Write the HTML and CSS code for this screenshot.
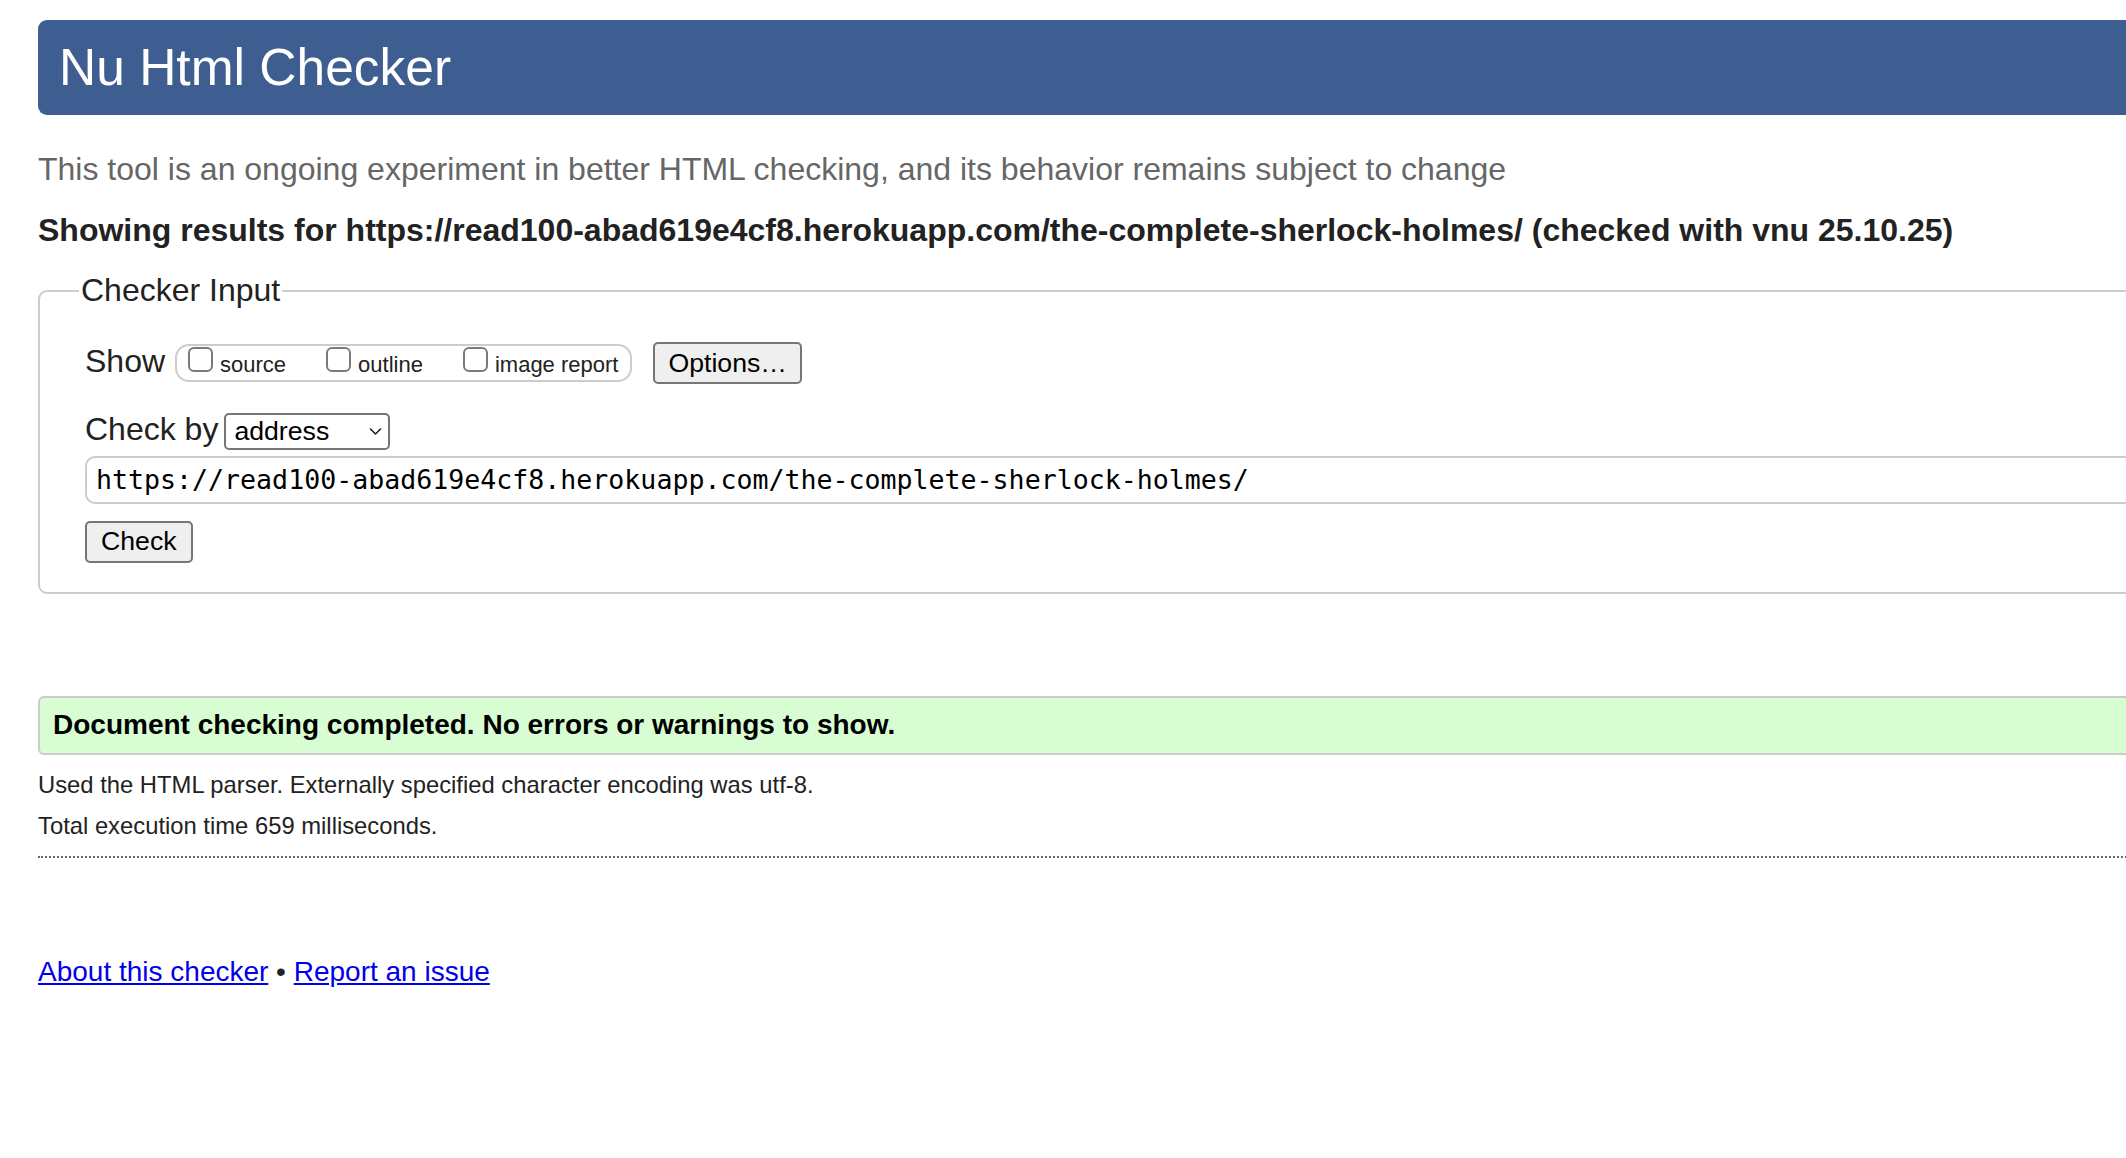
FILE: index.html
```html
<!DOCTYPE html>
<html lang="en">
<head>
<meta charset="utf-8">
<title>Showing results for https://read100-abad619e4cf8.herokuapp.com/the-complete-sherlock-holmes/ - Nu Html Checker</title>
<link rel="stylesheet" href="styles.css">
</head>
<body>
<div class="page">
  <h1 class="masthead">Nu Html Checker</h1>
  <p class="tagline">This tool is an ongoing experiment in better HTML checking, and its behavior remains subject to change</p>
  <p class="results-for">Showing results for https://read100-abad619e4cf8.herokuapp.com/the-complete-sherlock-holmes/ (checked with vnu 25.10.25)</p>
  <form class="checker-form" onsubmit="return false">
    <fieldset class="input-box">
      <legend>Checker Input</legend>
      <div class="row show-row">
        <span class="label">Show</span>
        <span class="show-options">
          <label class="opt"><input type="checkbox">source</label>
          <label class="opt"><input type="checkbox">outline</label>
          <label class="opt"><input type="checkbox">image report</label>
        </span>
        <button type="button" class="btn options-btn">Options…</button>
      </div>
      <div class="row by-row">
        <label class="label" for="docselect">Check by</label>
        <span class="select-wrap">
          <select id="docselect">
            <option selected>address</option>
            <option>file upload</option>
            <option>text input</option>
          </select>
          <svg class="chev" viewBox="0 0 12 7" aria-hidden="true"><path d="M1 1 L6 6 L11 1" fill="none" stroke="#1a1a1a" stroke-width="1.5" stroke-linecap="round" stroke-linejoin="round"/></svg>
        </span>
      </div>
      <input class="url" type="url" value="https://read100-abad619e4cf8.herokuapp.com/the-complete-sherlock-holmes/">
      <button type="submit" class="btn check-btn">Check</button>
    </fieldset>
  </form>
  <p class="success"><strong>Document checking completed. No errors or warnings to show.</strong></p>
  <p class="details">Used the HTML parser. Externally specified character encoding was utf-8.</p>
  <p class="details details-time">Total execution time 659 milliseconds.</p>
  <hr class="dots">
  <p class="footer-links"><a href="#">About this checker</a> • <a href="#">Report an issue</a></p>
</div>
</body>
</html>
```

FILE: styles.css
```css
html {
  overflow: hidden;
}

body {
  margin: 0;
  background: #fff;
  color: #222;
  font-family: "Liberation Sans", Arial, Helvetica, sans-serif;
  font-size: 32px;
}

.page {
  width: 2300px;
  padding: 20px 0 40px 38px;
}

.masthead {
  margin: 0;
  height: 95px;
  line-height: 95px;
  padding-left: 21px;
  background: #3e5d90;
  color: #fff;
  font-size: 51.5px;
  font-weight: normal;
  border-radius: 9px;
}

.tagline {
  margin: 36px 0 0;
  line-height: 37px;
  color: #666;
}

.results-for {
  margin: 24px 0 0;
  line-height: 37px;
  font-weight: bold;
  color: #222;
}

.checker-form {
  margin: 0;
}

.input-box {
  margin: 23px 0 0;
  padding: 0 0 29px 45px;
  border: 2px solid #ccc;
  border-radius: 9px;
  min-width: 0;
}

.input-box legend {
  margin-left: -6px;
  padding: 0 2px;
  line-height: 37px;
  color: #222;
}

.row {
  display: flex;
}

.label {
  line-height: 37px;
  color: #222;
}

.show-row {
  margin-top: 33px;
  height: 42px;
  align-items: center;
}

.show-row .label {
  margin-bottom: 4px;
}

.show-options {
  display: flex;
  align-items: baseline;
  box-sizing: border-box;
  height: 38px;
  margin-left: 10px;
  padding: 1px 12px 0 11px;
  border: 2px solid #ccc;
  border-radius: 14px;
  font-size: 22px;
  line-height: 32px;
  color: #222;
}

.opt {
  display: flex;
  align-items: baseline;
  margin-right: 40px;
}

.opt:last-child {
  margin-right: 0;
}

.opt input {
  appearance: none;
  -webkit-appearance: none;
  box-sizing: border-box;
  width: 25px;
  height: 25px;
  margin: 0 7px 0 0;
  border: 2px solid #7a7a7a;
  border-radius: 6px;
  background: #fff;
}

.btn {
  box-sizing: border-box;
  height: 42px;
  padding: 0 13px;
  border: 2px solid #767676;
  border-radius: 5px;
  background: #efefef;
  color: #000;
  font-family: "Liberation Sans", Arial, Helvetica, sans-serif;
  font-size: 26.67px;
}

.options-btn {
  margin-left: 21px;
}

.by-row {
  margin-top: 27px;
  align-items: baseline;
}

.select-wrap {
  position: relative;
  display: flex;
  margin-left: 6px;
}

.select-wrap select {
  appearance: none;
  -webkit-appearance: none;
  box-sizing: border-box;
  width: 166px;
  height: 37px;
  margin: 0;
  padding: 0 0 0 8px;
  border: 2px solid #767676;
  border-radius: 5px;
  background: #fff;
  color: #000;
  font-family: "Liberation Sans", Arial, Helvetica, sans-serif;
  font-size: 26.67px;
}

.chev {
  position: absolute;
  right: 8px;
  top: 15px;
  width: 13px;
  height: 7px;
  pointer-events: none;
}

.url {
  display: block;
  box-sizing: border-box;
  width: 2100px;
  height: 48px;
  margin: 6px 0 0;
  padding: 0 9px;
  border: 2px solid #ccc;
  border-radius: 10px;
  background: #fff;
  color: #000;
  font-family: "DejaVu Sans Mono", "Liberation Mono", monospace;
  font-size: 26.6px;
}

.check-btn {
  display: block;
  margin-top: 17px;
  padding: 0 14px;
}

.success {
  box-sizing: border-box;
  margin: 102px 0 0;
  padding: 0 0 2px 13px;
  border: 2px solid #ccc;
  border-radius: 6px;
  background: #d8fdd3;
  color: #000;
  font-size: 28px;
  line-height: 53px;
}

.details {
  margin: 15px 0 0;
  font-size: 23.8px;
  line-height: 30px;
  color: #222;
}

.details-time {
  margin-top: 11px;
}

.dots {
  height: 0;
  margin: 15px 0 0;
  border: 0;
  border-top: 2px dotted #666;
}

.footer-links {
  margin: 98px 0 0;
  font-size: 28px;
  line-height: 32px;
  color: #222;
}

.footer-links a {
  color: #0000ee;
}
```
